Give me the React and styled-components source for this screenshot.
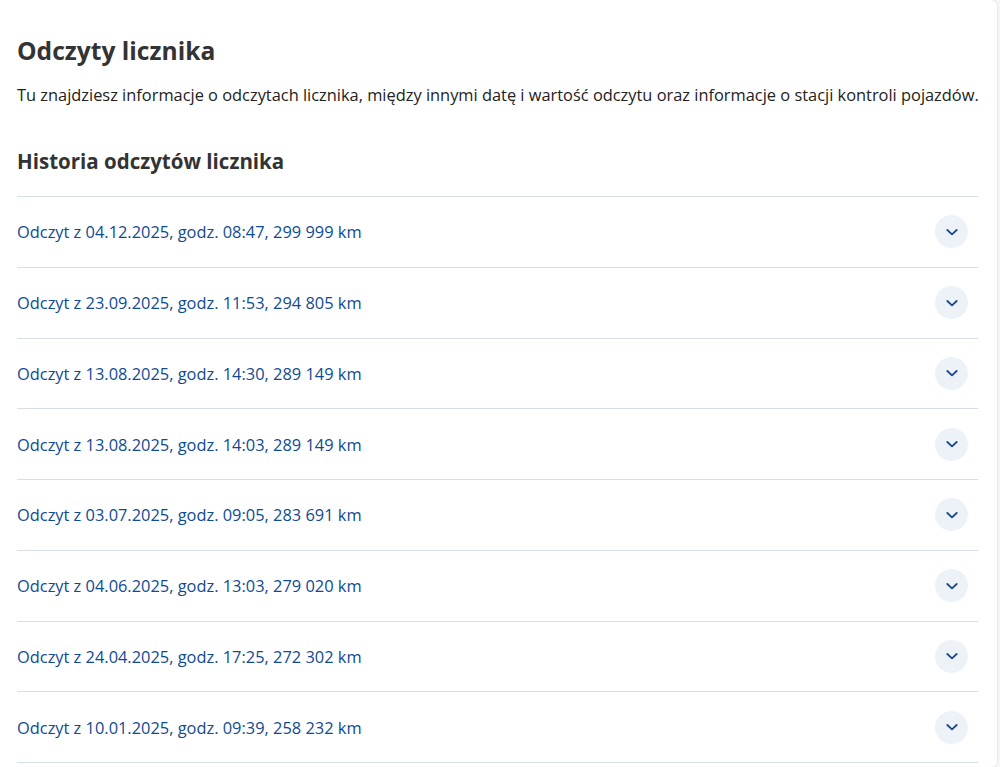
import { useState } from 'react';
import styled, { createGlobalStyle } from 'styled-components';

const readings = [
    { date: '04.12.2025', time: '08:47', km: '299 999' },
    { date: '23.09.2025', time: '11:53', km: '294 805' },
    { date: '13.08.2025', time: '14:30', km: '289 149' },
    { date: '13.08.2025', time: '14:03', km: '289 149' },
    { date: '03.07.2025', time: '09:05', km: '283 691' },
    { date: '04.06.2025', time: '13:03', km: '279 020' },
    { date: '24.04.2025', time: '17:25', km: '272 302' },
    { date: '10.01.2025', time: '09:39', km: '258 232' },
];

const Chevron = () => (
    <svg width="16" height="16" viewBox="0 0 24 24" fill="none" stroke="currentColor" strokeWidth="2.8" strokeLinecap="round" strokeLinejoin="round">
        <path d="M5 9l7 6.5 7-6.5" />
    </svg>
);

const App = () => {
    const [open, setOpen] = useState(null);

    return (
        <Page>
            <GlobalStyle />
            <Card>
                <Title>Odczyty licznika</Title>
                <Lead>
                    Tu znajdziesz informacje o odczytach licznika, między innymi datę i wartość odczytu oraz informacje o stacji kontroli pojazdów.
                </Lead>
                <SubTitle>Historia odczytów licznika</SubTitle>
                <List>
                    {readings.map((r, index) => (
                        <Row key={index} onClick={() => setOpen(open === index ? null : index)}>
                            <RowLabel>
                                Odczyt z {r.date}, godz. {r.time}, {r.km} km
                            </RowLabel>
                            <ToggleBtn $open={open === index}>
                                <Chevron />
                            </ToggleBtn>
                        </Row>
                    ))}
                </List>
            </Card>
        </Page>
    );
};

const GlobalStyle = createGlobalStyle`
    body {
        margin: 0;
        background: #f7f7f7;
        font-family: 'Open Sans', 'Noto Sans', sans-serif;
    }
`;
const Page = styled.div`
    padding-right: 3px;
    overflow: hidden;
`;
const Card = styled.div`
    margin-left: -6px;
    padding: 34px 19px 0 23px;
    background: #ffffff;
    border-radius: 0 6px 6px 0;
    box-shadow: 0 0 3px rgba(0, 0, 0, 0.14);
    min-height: 767px;
    box-sizing: border-box;
`;
const Title = styled.h1`
    margin: 0;
    font-size: 24.6px;
    line-height: 34px;
    font-weight: 700;
    color: #333333;
`;
const Lead = styled.p`
    margin: 15px 0 0;
    font-size: 16.4px;
    line-height: 24px;
    color: #222222;
    white-space: nowrap;
`;
const SubTitle = styled.h2`
    margin: 39px 0 0;
    font-size: 20.5px;
    line-height: 30px;
    font-weight: 700;
    color: #333333;
`;
const List = styled.div`
    margin-top: 20px;
    border-top: 1px solid #d7dfe8;
`;
const Row = styled.div`
    display: flex;
    align-items: center;
    justify-content: space-between;
    height: 70.75px;
    box-sizing: border-box;
    border-bottom: 1px solid #d7dfe8;
    cursor: pointer;
`;
const RowLabel = styled.span`
    font-size: 16.4px;
    color: #0f4b93;
`;
const ToggleBtn = styled.span`
    display: flex;
    align-items: center;
    justify-content: center;
    width: 33px;
    height: 33px;
    margin-right: 10px;
    border-radius: 50%;
    background: #edf2f8;
    color: #1b4a88;
    transform: rotate(${(p) => (p.$open ? '180deg' : '0')});
`;

export default App;
